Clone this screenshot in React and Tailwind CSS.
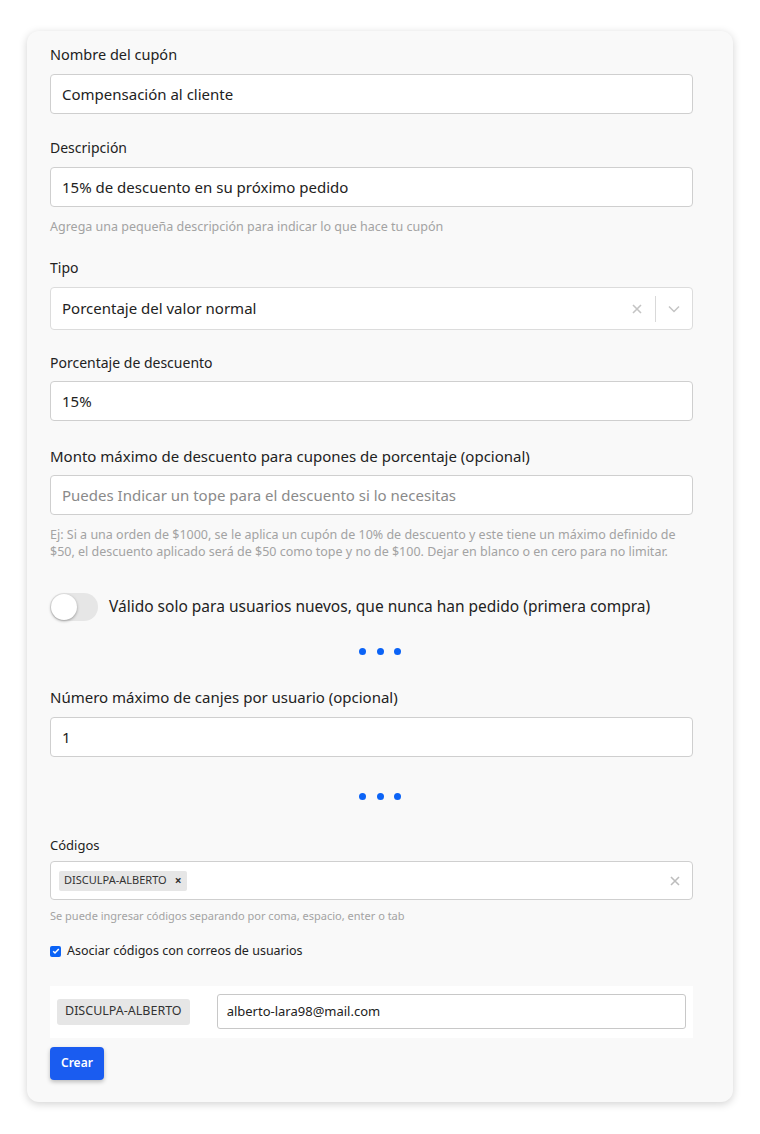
import React from "react";

const font = { fontFamily: '"Noto Sans", "Open Sans", sans-serif' };

const Label = ({ children, className = "text-[14px] leading-[21px] mb-[9px]" }) => (
  <label className={`block text-[#222] ${className}`}>{children}</label>
);

const TextInput = ({ value, placeholder }) => (
  <div className="h-[40px] w-full bg-white border border-[#cfcfcf] rounded-[4px] flex items-center px-[11px] text-[15px]">
    {value ? <span className="text-[#222]">{value}</span> : <span className="text-[#8a8a8a]">{placeholder}</span>}
  </div>
);

const Help = ({ children, className = "text-[12.5px] leading-[17px] mt-[11px]" }) => (
  <p className={`text-[#a3a3a3] ${className}`}>{children}</p>
);

const Dots = () => (
  <div className="flex justify-center gap-[10.5px] py-[2px] -mr-[17px]">
    <span className="w-[7px] h-[7px] rounded-full bg-[#0b63f6]" />
    <span className="w-[7px] h-[7px] rounded-full bg-[#0b63f6]" />
    <span className="w-[7px] h-[7px] rounded-full bg-[#0b63f6]" />
  </div>
);

const CloseIcon = () => (
  <svg width="10" height="10" viewBox="0 0 10 10" fill="none" stroke="currentColor" strokeWidth="1.6">
    <path d="M1 1l8 8M9 1l-8 8" />
  </svg>
);

export default function App() {
  return (
    <div className="min-h-screen bg-white pt-[31px] pl-[27px] pr-[27px] pb-[32px]" style={font}>
      <div className="w-[706px] bg-[#f9f9f9] rounded-[12px] shadow-[0_2px_8px_rgba(0,0,0,0.18)] pl-[23px] pr-[40px] pt-[13px] pb-[22px]">
        {/* Nombre */}
        <Label className="text-[14.5px] leading-[21px] mb-[9px]">Nombre del cupón</Label>
        <TextInput value="Compensación al cliente" />

        {/* Descripción */}
        <Label className="text-[14px] leading-[21px] mb-[9px] mt-[23px]">Descripción</Label>
        <TextInput value="15% de descuento en su próximo pedido" />
        <Help>Agrega una pequeña descripción para indicar lo que hace tu cupón</Help>

        {/* Tipo */}
        <Label className="text-[14px] leading-[21px] mb-[9px] mt-[22px]">Tipo</Label>
        <div className="h-[43px] w-full bg-white border border-[#dcdcdc] rounded-[4px] flex items-center pl-[11px] text-[15px]">
          <span className="flex-1 text-[#222]">Porcentaje del valor normal</span>
          <span className="w-[36px] flex justify-center text-[#c4c4c4]">
            <CloseIcon />
          </span>
          <span className="w-px h-[26px] bg-[#d9d9d9]" />
          <span className="w-[36px] flex justify-center text-[#c4c4c4]">
            <svg width="12" height="8" viewBox="0 0 12 8" fill="none" stroke="currentColor" strokeWidth="1.5">
              <path d="M1 1.5l5 5 5-5" />
            </svg>
          </span>
        </div>

        {/* Porcentaje */}
        <Label className="text-[14px] leading-[21px] mb-[8px] mt-[22px]">Porcentaje de descuento</Label>
        <TextInput value="15%" />

        {/* Monto máximo */}
        <Label className="text-[15px] leading-[21px] mb-[8px] mt-[25px]">
          Monto máximo de descuento para cupones de porcentaje (opcional)
        </Label>
        <TextInput placeholder="Puedes Indicar un tope para el descuento si lo necesitas" />
        <Help>
          Ej: Si a una orden de $1000, se le aplica un cupón de 10% de descuento y este tiene un máximo definido de $50, el descuento aplicado será de $50 como tope y no de $100. Dejar en blanco o en cero para no limitar.
        </Help>

        {/* Toggle */}
        <div className="flex items-center gap-[11px] mt-[33px]">
          <div className="w-[48px] h-[28px] rounded-full bg-[#e6e6e6] flex items-center px-[1px]">
            <span className="w-[26px] h-[26px] rounded-full bg-white shadow-[0_1px_3px_rgba(0,0,0,0.35)]" />
          </div>
          <span className="text-[15.5px] text-[#222]">Válido solo para usuarios nuevos, que nunca han pedido (primera compra)</span>
        </div>

        <div className="mt-[25px]">
          <Dots />
        </div>

        {/* Número máximo */}
        <Label className="text-[15px] leading-[21px] mb-[9px] mt-[30px]">Número máximo de canjes por usuario (opcional)</Label>
        <TextInput value="1" />

        <div className="mt-[34px]">
          <Dots />
        </div>

        {/* Códigos */}
        <Label className="text-[13px] leading-[19px] mb-[6px] mt-[34px]">Códigos</Label>
        <div className="h-[39px] w-full bg-white border border-[#cfcfcf] rounded-[4px] flex items-center pl-[8px] pr-[12px]">
          <span className="flex items-center gap-[8px] bg-[#e6e6e6] rounded-[2px] h-[20px] px-[5px] text-[11px] text-[#333]">
            DISCULPA-ALBERTO
            <span className="text-[12px] font-bold text-[#333]">×</span>
          </span>
          <span className="flex-1" />
          <span className="text-[#bdbdbd]">
            <CloseIcon />
          </span>
        </div>
        <Help className="text-[11px] leading-[16px] mt-[8px]">
          Se puede ingresar códigos separando por coma, espacio, enter o tab
        </Help>

        <div className="flex items-center gap-[6px] mt-[18px]">
          <span className="w-[11px] h-[11px] rounded-[2px] bg-[#0b63f6] flex items-center justify-center">
            <svg width="8" height="8" viewBox="0 0 8 8" fill="none" stroke="white" strokeWidth="1.5">
              <path d="M1.2 4.2l1.8 1.8 3.8-4" />
            </svg>
          </span>
          <span className="text-[12.5px] text-[#222]">Asociar códigos con correos de usuarios</span>
        </div>

        {/* Asociación */}
        <div className="mt-[25px] bg-white flex items-center h-[52px] pl-[7px] pr-[7px]">
          <span className="bg-[#e6e6e6] rounded-[3px] h-[26px] px-[8px] flex items-center text-[12.5px] text-[#333]">
            DISCULPA-ALBERTO
          </span>
          <div className="ml-[27px] flex-1 h-[35px] border border-[#c8c8c8] rounded-[3px] flex items-center px-[9px] text-[13px] text-[#222]">
            alberto-lara98@mail.com
          </div>
        </div>

        <button className="mt-[9px] h-[33px] px-[11px] rounded-[4px] bg-[#1a5cf0] text-white text-[12px] font-semibold shadow-[0_2px_4px_rgba(0,0,0,0.25)]">
          Crear
        </button>
      </div>
    </div>
  );
}
